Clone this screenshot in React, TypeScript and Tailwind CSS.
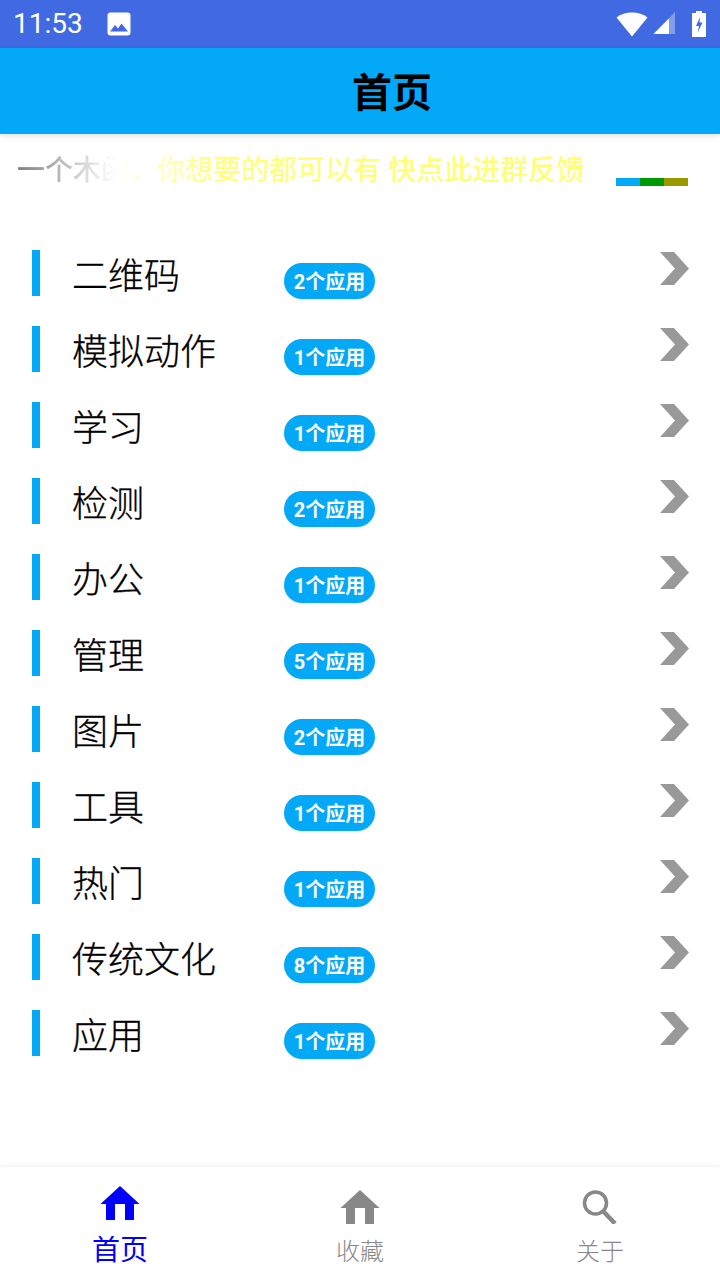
const rows = [
  { name: "二维码", count: 2 },
  { name: "模拟动作", count: 1 },
  { name: "学习", count: 1 },
  { name: "检测", count: 2 },
  { name: "办公", count: 1 },
  { name: "管理", count: 5 },
  { name: "图片", count: 2 },
  { name: "工具", count: 1 },
  { name: "热门", count: 1 },
  { name: "传统文化", count: 8 },
  { name: "应用", count: 1 },
];

function HomeIcon({ color }: { color: string }) {
  return (
    <svg width="40" height="34" viewBox="0 0 40 34" fill={color}>
      <path d="M20 0 L39.5 18 H34 V34 H6 V18 H0.5 Z" />
      <rect x="15" y="18" width="10" height="16" fill="white" />
    </svg>
  );
}

function StatusBar() {
  return (
    <div className="flex h-12 items-center justify-between bg-[#4169e1] pl-[13px] pr-[14px] text-white">
      <div className="flex items-center">
        <span className="font-['Roboto',sans-serif] text-[28px] leading-none font-normal">11:53</span>
        <svg className="ml-[24px]" width="24" height="24" viewBox="0 0 24 24">
          <rect width="23" height="23" x="0.5" y="0.5" rx="3" fill="white" />
          <path d="M3 19.5 L8 13 L11 16.5 L14.5 11.5 L21 19.5 Z" fill="#4169e1" />
        </svg>
      </div>
      <div className="flex items-center">
        <svg width="32" height="26" viewBox="0 0 32 26">
          <path d="M16 25.5 L0.5 6.5 Q7 1.5 16 1.5 Q25 1.5 31.5 6.5 Z" fill="white" />
        </svg>
        <svg className="ml-[5px]" width="23" height="24" viewBox="0 0 23 24">
          <path d="M0.5 22 L22 0 V22 Z" fill="white" fillOpacity="0.35" />
          <path d="M0.5 22 L16 6.5 V22 Z" fill="white" />
        </svg>
        <svg className="ml-[16px]" width="14" height="26" viewBox="0 0 14 26">
          <path d="M4 0 H10 V2 H14 V26 H0 V2 H4 Z" fill="white" />
          <path d="M8 6 L4 15 H7 L5.5 22 L10.5 11.5 H7.5 Z" fill="#4169e1" />
        </svg>
      </div>
    </div>
  );
}

export default function App() {
  return (
    <div className="flex h-[1280px] w-[720px] flex-col overflow-hidden bg-white font-['Roboto','Noto_Sans_CJK_SC',sans-serif]">
      <StatusBar />

      <header className="z-10 flex h-[86px] items-start justify-center bg-[#03a9f7] pt-[22px] pl-[64px] shadow-[0_2px_6px_rgba(0,0,0,0.12)]">
        <h1 className="text-[40px] leading-[48px] font-bold text-black">首页</h1>
      </header>

      <div className="flex h-[66px] items-start justify-between pt-[19px] pl-[17px] pr-[32px]">
        <span className="bg-[linear-gradient(90deg,#808080_0px,#c0c0c0_50px,#f0f0f0_85px,#ffffff_100px,#ffffd8_125px,#ffff80_195px,#ffff70_100%)] bg-clip-text text-[28px] leading-[36px] font-medium whitespace-nowrap text-transparent">
          一个木函，你想要的都可以有 快点此进群反馈
        </span>
        <div className="mt-[25px] flex h-2 w-[72px]">
          <div className="flex-1 bg-[#03a9f7]" />
          <div className="flex-1 bg-[#009900]" />
          <div className="flex-1 bg-[#999900]" />
        </div>
      </div>

      <ul className="flex flex-col pt-[50px]">
        {rows.map((row) => (
          <li key={row.name} className="relative flex h-[76px] items-start pl-8">
            <div className="h-[46px] w-2 bg-[#03a9f7]" />
            <span className="mt-[2px] ml-[32px] w-[212px] text-[36px] leading-[50px] font-light text-black [-webkit-text-stroke:0.3px_black]">
              {row.name}
            </span>
            <span className="mt-[13px] flex h-9 w-[91px] items-center justify-center rounded-full bg-[#03a9f7] pt-[1px] text-[20px] leading-none font-bold text-white">
              {row.count}个应用
            </span>
            <svg className="absolute top-[2px] right-[31px]" width="29" height="33" viewBox="0 0 29 33">
              <path d="M0 0 H14 L29 16.5 L14 33 H0 L15 16.5 Z" fill="#999999" />
            </svg>
          </li>
        ))}
      </ul>

      <nav className="mt-auto grid h-[113px] grid-cols-3 bg-white shadow-[0_-2px_4px_rgba(0,0,0,0.05)]">
        <div className="flex flex-col items-center pt-[19px]">
          <HomeIcon color="#0000ff" />
          <span className="mt-[11px] text-[28px] leading-[40px] text-[#0000ff]">首页</span>
        </div>
        <div className="flex flex-col items-center pt-[23px]">
          <HomeIcon color="#888888" />
          <span className="mt-[10px] text-[24px] leading-[36px] font-light text-[#888888]">收藏</span>
        </div>
        <div className="flex flex-col items-center pt-[23px]">
          <svg width="40" height="34" viewBox="0 0 40 34" fill="none" stroke="#888888">
            <circle cx="15.5" cy="13" r="11" strokeWidth="3.5" />
            <path d="M23.5 21.5 L35 33.5" strokeWidth="4.5" />
          </svg>
          <span className="mt-[10px] text-[24px] leading-[36px] font-light text-[#888888]">关于</span>
        </div>
      </nav>
    </div>
  );
}
